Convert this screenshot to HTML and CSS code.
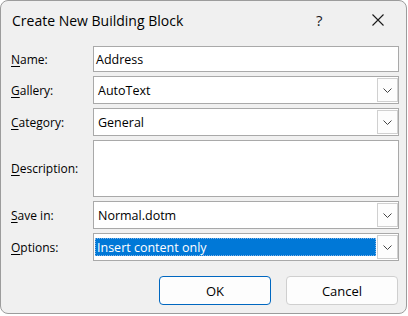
FILE: index.html
```html
<!DOCTYPE html>
<html lang="en">
<head>
  <meta charset="UTF-8">
  <title>Create New Building Block</title>
  <link rel="stylesheet" href="styles.css">
</head>
<body>
  <div class="dialog">
    <div class="titlebar">
      <span class="title">Create New Building Block</span>
      <span class="help">?</span>
      <span class="close">
        <svg width="12" height="12" viewBox="0 0 12 12">
          <path d="M0.5 0.5 L11.5 11.5 M11.5 0.5 L0.5 11.5" stroke="#1a1a1a" stroke-width="1.1" fill="none"/>
        </svg>
      </span>
    </div>

    <div class="form">
      <label class="label"><u>N</u>ame:</label>
      <div class="field text-field">Address</div>

      <label class="label"><u>G</u>allery:</label>
      <div class="field select">
        <span class="value">AutoText</span>
        <span class="drop"><svg width="9" height="5" viewBox="0 0 9 5"><path d="M0.5 0.5 L4.5 4.5 L8.5 0.5" stroke="#444" fill="none"/></svg></span>
      </div>

      <label class="label"><u>C</u>ategory:</label>
      <div class="field select">
        <span class="value">General</span>
        <span class="drop"><svg width="9" height="5" viewBox="0 0 9 5"><path d="M0.5 0.5 L4.5 4.5 L8.5 0.5" stroke="#444" fill="none"/></svg></span>
      </div>

      <label class="label"><u>D</u>escription:</label>
      <div class="field textarea"></div>

      <label class="label"><u>S</u>ave in:</label>
      <div class="field select">
        <span class="value">Normal.dotm</span>
        <span class="drop"><svg width="9" height="5" viewBox="0 0 9 5"><path d="M0.5 0.5 L4.5 4.5 L8.5 0.5" stroke="#444" fill="none"/></svg></span>
      </div>

      <label class="label"><u>O</u>ptions:</label>
      <div class="field select focused">
        <span class="value selected">Insert content only</span>
        <span class="drop"><svg width="9" height="5" viewBox="0 0 9 5"><path d="M0.5 0.5 L4.5 4.5 L8.5 0.5" stroke="#444" fill="none"/></svg></span>
      </div>
    </div>

    <div class="buttons">
      <button class="btn default">OK</button>
      <button class="btn">Cancel</button>
    </div>
  </div>
</body>
</html>
```

FILE: styles.css
```css
:root {
  --dialog-bg: #f0f0f0;
  --border-color: #a9a9a9;
  --accent: #0078d7;
  --text-color: #000;
}

* {
  box-sizing: border-box;
  margin: 0;
  padding: 0;
}

body {
  font-family: 'Open Sans', 'Noto Sans', sans-serif;
  font-size: 12px;
  color: var(--text-color);
  background: #fff;
}

.dialog {
  width: 407px;
  height: 314px;
  background: var(--dialog-bg);
  border: 1px solid #9c9c9c;
  border-radius: 8px;
}

.titlebar {
  height: 38px;
  display: flex;
  align-items: center;
  padding-left: 11px;
}

.title {
  font-size: 14px;
  flex: 1;
}

.help {
  font-size: 15px;
  width: 10px;
  margin-right: 46px;
  color: #1a1a1a;
}

.close {
  display: flex;
  margin-right: 22px;
}

.form {
  display: grid;
  grid-template-columns: 82px 306px;
  grid-template-rows: 26px 28px 28px 57px 28px 28px;
  row-gap: 4px;
  padding: 7px 0 0 10px;
}

.label {
  display: flex;
  align-items: center;
  font-size: 12px;
}

.label u {
  text-underline-offset: 2px;
}

.field {
  background: #fff;
  border: 1px solid var(--border-color);
  font-size: 12.5px;
}

.text-field {
  display: flex;
  align-items: center;
  padding-left: 2px;
}

.select {
  display: flex;
  align-items: stretch;
}

.select .value {
  flex: 1;
  display: flex;
  align-items: center;
  padding-left: 4px;
}

.select .drop {
  width: 21px;
  margin: 1px 0 1px 1px;
  border: 1px solid #d0d0d0;
  background: #fdfdfd;
  display: flex;
  align-items: center;
  justify-content: center;
}

.select.focused .value {
  margin: 4px 0 4px 1px;
  padding-left: 2px;
}

.selected {
  background: var(--accent);
  color: #fff;
  outline: 1px dotted #7fb3e8;
  outline-offset: -1px;
}

.buttons {
  display: flex;
  justify-content: flex-end;
  gap: 15px;
  padding: 15px 8px 0 0;
}

.btn {
  width: 112px;
  height: 29px;
  border: 1px solid #cfcfcf;
  border-radius: 4px;
  background: #fdfdfd;
  font-family: inherit;
  font-size: 13px;
  color: var(--text-color);
}

.btn.default {
  border-color: #0067c0;
}
```
